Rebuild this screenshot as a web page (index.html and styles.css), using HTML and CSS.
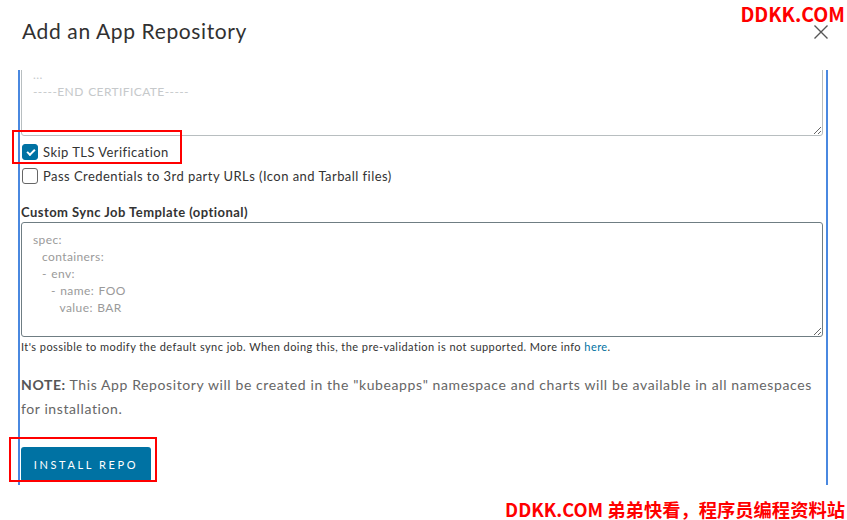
FILE: index.html
```html
<!DOCTYPE html>
<html lang="en">

<head>
  <meta charset="UTF-8">
  <meta name="viewport" content="width=device-width, initial-scale=1.0">
  <title>Add an App Repository</title>
  <link rel="stylesheet" href="styles.css">
</head>

<body>
  <div class="modal">
    <div class="modal-header">
      <h3 class="modal-title">Add an App Repository</h3>
      <button class="close" aria-label="Close">
        <svg width="16" height="16" viewBox="0 0 16 16">
          <path d="M1.5 1.5 L14.5 14.5 M14.5 1.5 L1.5 14.5" stroke="#565656" stroke-width="1.4" fill="none"/>
        </svg>
      </button>
    </div>

    <div class="modal-body">
      <textarea class="field cert" placeholder="-----BEGIN CERTIFICATE-----&#10;...&#10;-----END CERTIFICATE-----"></textarea>

      <label class="check">
        <input type="checkbox" checked>
        <span class="box"></span>
        Skip TLS Verification
      </label>
      <label class="check">
        <input type="checkbox">
        <span class="box"></span>
        Pass Credentials to 3rd party URLs (Icon and Tarball files)
      </label>

      <label class="field-label" for="syncjob">Custom Sync Job Template (optional)</label>
      <textarea id="syncjob" class="field sync" placeholder="spec:&#10;  containers:&#10;  - env:&#10;    - name: FOO&#10;      value: BAR"></textarea>
      <p class="helper">It's possible to modify the default sync job. When doing this, the pre-validation is not supported. More info <a href="#">here</a>.</p>

      <p class="note"><span class="note-tag">NOTE:</span> This App Repository will be created in the "kubeapps" namespace and charts will be available in all namespaces for installation.</p>

      <button class="btn-primary">Install Repo</button>
    </div>
  </div>

  <div class="mark mark-tls"></div>
  <div class="mark mark-btn"></div>

  <div class="wm wm-top">DDKK.COM</div>
  <div class="wm wm-bottom">DDKK.COM 弟弟快看，程序员编程资料站</div>
</body>

</html>
```

FILE: styles.css
```css
body{
  margin:0;
  background:#fff;
  font-family:Lato, "Noto Sans", sans-serif;
  color:#333;
}
.modal{
  width:847px;
  height:520px;
}
.modal-header{
  display:flex;
  justify-content:space-between;
  align-items:flex-start;
  height:52px;
  padding:18px 18px 0 22px;
}
.modal-title{
  margin:0;
  font-size:21px;
  font-weight:400;
  line-height:26px;
  color:#313131;
  letter-spacing:0.62px;
}
.close{
  border:none;
  background:none;
  padding:0;
  margin:6px 0 0 0;
  width:16px;
  height:16px;
}
.modal-body{
  margin-left:18px;
  width:804px;
  height:415px;
  padding:0 1px;
  border-left:2px solid #4a88e0;
  border-right:2px solid #4a88e0;
  overflow:hidden;
  box-sizing:content-box;
}
.field{
  display:block;
  width:802px;
  box-sizing:border-box;
  border:1px solid #9aa4a8;
  border-radius:3px;
  padding:8px 11px;
  font-family:Lato, "Noto Sans", sans-serif;
  font-size:12px;
  line-height:17px;
  letter-spacing:0.4px;
  word-spacing:1px;
  resize:vertical;
  margin:0;
}
.field::placeholder{
  white-space:pre;
}
.cert{
  height:96px;
  margin-top:-30px;
  border-color:#b8bec0;
}
.cert::placeholder{
  color:#c6c9cb;
}
.sync{
  height:115px;
  border-color:#6f7d83;
}
.sync::placeholder{
  color:#9a9a9a;
}
.check{
  display:flex;
  align-items:center;
  height:24px;
  font-size:13px;
  letter-spacing:0.45px;
  color:#333;
}
.check:first-of-type{
  margin-top:4px;
}
.check input{
  display:none;
}
.check .box{
  width:16px;
  height:16px;
  box-sizing:border-box;
  border:1px solid #666;
  border-radius:3px;
  margin:0 5px 0 1px;
  position:relative;
}
.check input:checked + .box{
  background:#0072a3;
  border-color:#0072a3;
}
.check input:checked + .box::after{
  content:"";
  position:absolute;
  left:4px;
  top:4px;
  width:6px;
  height:3px;
  border-left:2px solid #fff;
  border-bottom:2px solid #fff;
  transform:rotate(-45deg);
}
.field-label{
  display:block;
  margin-top:15px;
  margin-bottom:1px;
  font-size:13px;
  font-weight:700;
  line-height:18px;
  letter-spacing:0.45px;
  color:#333;
}
.helper{
  margin:3px 0 0 0;
  font-size:11px;
  line-height:14px;
  letter-spacing:0.44px;
  color:#333;
}
.helper a{
  color:#0072a3;
  text-decoration:none;
}
.note{
  margin:19px 0 0 0;
  font-size:14px;
  line-height:24px;
  letter-spacing:0.6px;
  color:#666;
}
.note-tag{
  font-weight:700;
  color:#565656;
}
.btn-primary{
  display:block;
  margin-top:26px;
  width:130px;
  height:35px;
  border:none;
  border-radius:3px;
  background:#0072a3;
  color:#fff;
  font-family:Lato, "Noto Sans", sans-serif;
  font-size:11px;
  letter-spacing:2.6px;
  text-transform:uppercase;
}
.mark{
  position:absolute;
  border:2px solid #f00;
}
.mark-tls{
  left:12px;
  top:130px;
  width:166px;
  height:30px;
}
.mark-btn{
  left:9px;
  top:437px;
  width:144px;
  height:41px;
}
.wm{
  position:absolute;
  right:2px;
  color:#f00;
  font-family:"Noto Sans CJK SC", sans-serif;
  font-weight:700;
  white-space:nowrap;
}
.wm-top{
  top:3px;
  font-size:19.5px;
  line-height:22px;
}
.wm-bottom{
  top:498px;
  font-size:18.3px;
  line-height:22px;
}
```
